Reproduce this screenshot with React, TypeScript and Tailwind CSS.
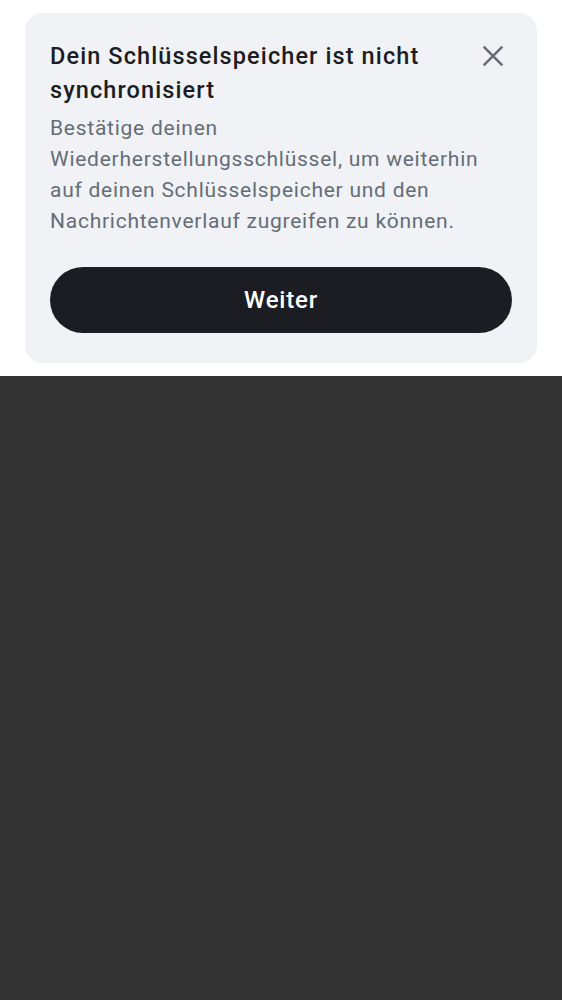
import React from "react";

const CloseIcon = () => (
  <svg width="28" height="28" viewBox="0 0 24 24" fill="none">
    <path
      d="M4 4L20 20M20 4L4 20"
      stroke="#656d77"
      strokeWidth="2.2"
      strokeLinecap="butt"
    />
  </svg>
);

const App = () => {
  return (
    <div className="flex flex-col w-full min-h-[1000px] font-['Roboto',sans-serif]">
      <div className="bg-white px-[25px] pt-[13px] pb-[13px]">
        <div className="bg-[#f0f2f5] rounded-[18px] px-[25px] pt-[26px] pb-[30px]">
          <div className="flex flex-row items-start justify-between">
            <h2 className="text-[23.5px] leading-[34px] font-medium tracking-[1.1px] text-[#1b1d22] pr-4">
              Dein Schlüsselspeicher ist nicht synchronisiert
            </h2>
            <button className="mt-[3px] mr-[5px] shrink-0">
              <CloseIcon />
            </button>
          </div>
          <p className="text-[21px] leading-[31px] tracking-[0.75px] text-[#656d77] mt-[6px] pr-[16px]">
            Bestätige deinen Wiederherstellungsschlüssel, um weiterhin auf deinen
            Schlüsselspeicher und den Nachrichtenverlauf zugreifen zu können.
          </p>
          <button className="mt-[30px] w-full h-[66px] rounded-full bg-[#1b1d22] text-white text-[24px] tracking-[0.8px] font-medium">
            Weiter
          </button>
        </div>
      </div>
      <div className="flex-1 bg-[#333333]" />
    </div>
  );
};

export default App;
